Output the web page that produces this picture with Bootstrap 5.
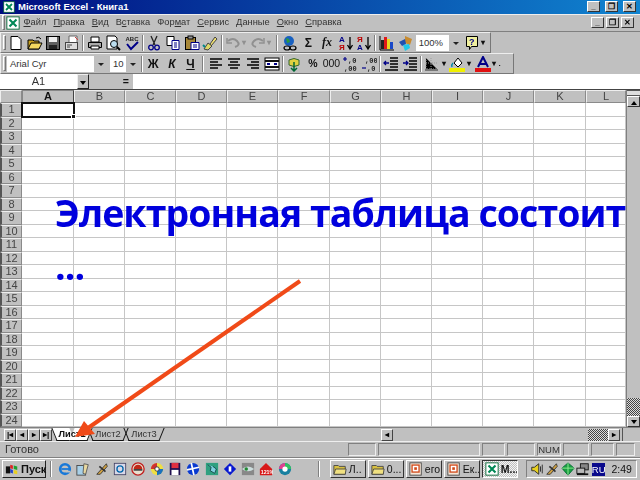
<!DOCTYPE html>
<html lang="ru">

<head>
    <meta charset="UTF-8">
    <meta name="viewport" content="width=device-width, initial-scale=1">
    <title>Microsoft Excel - Книга1</title>
    <link href="https://cdn.jsdelivr.net/npm/bootstrap@5.3.0/dist/css/bootstrap.min.css" rel="stylesheet">
    <style>
        html, body { margin: 0; width: 640px; height: 480px; overflow: hidden; background: #c0c0c0; }
        .xl-app { width: 640px; height: 480px; font: 10.5px/1 "Liberation Sans", Arial, sans-serif; color: #111; filter: blur(.35px); }
        .xl-title { height: 15px; background: linear-gradient(90deg, #000c80, #1084d0); color: #fff; font-weight: 700; font-size: 9.5px; padding-left: 3px; gap: 3px; border-bottom: 1px solid #eee; }
        .xl-wbtn { width: 13px; height: 11px; background: #c0c0c0; border: 1px solid; border-color: #fff #333 #333 #fff; font-size: 8px; font-weight: 700; color: #000; line-height: 9px; text-align: center; margin-left: 2px; flex: none; overflow: hidden; }
        .xl-menu { height: 18px; padding: 0 2px 0 1px; border-bottom: 1px solid #808080; font-size: 9.3px; color: #333; }
        .xl-grip { width: 3px; height: 15px; border: 1px solid; border-color: #fff #777 #777 #fff; margin: 0 1px; flex: none; }
        .xl-item { padding: 0 3.5px; white-space: nowrap; flex: none; }
        .xl-bar { height: 21px; border: 1px solid; border-color: #eee #777 #777 #eee; padding-left: 1px; }
        .xl-bar-a { width: 491px; }
        .xl-bar-b { width: 514px; }
        .xl-barwrap { background: #c0c0c0; }
        .xl-tb { width: 18.6px; height: 18px; flex: none; display: flex; align-items: center; justify-content: center; }
        .xl-tb svg { width: 16px; height: 16px; }
        .xl-glyph { font-weight: 700; font-size: 12px; }
        .xl-serif { font: italic 700 12px "Liberation Serif", serif; }
        .xl-sep { width: 2px; height: 16px; border-left: 1px solid #808080; border-right: 1px solid #fff; margin: 0 1px; flex: none; }
        .xl-sep-wide { margin: 0 2.4px; }
        .xl-sep-start { margin: 0 4px; }
        .xl-sep-task { margin: 0 10px 0 24px; }
        .xl-combo { height: 16px; background: #fff; border-right: 14px solid #c0c0c0; padding-left: 3px; line-height: 16px; font-size: 9.5px; color: #333; position: relative; flex: none; }
        .xl-combo::after { content: ""; position: absolute; right: -10px; top: 7px; border: 3px solid transparent; border-top: 3px solid #222; }
        .xl-combo-zoom { width: 47px; margin-left: 1px; }
        .xl-combo-font { width: 101px; }
        .xl-combo-size { width: 30px; margin-left: 2px; }
        .xl-tw { width: 6.5px; font-weight: 700; font-size: 8px; flex: none; }
        .xl-gray { color: #909090; }
        .xl-formula { height: 15px; background: #fff; }
        .xl-namebox { width: 77px; text-align: center; line-height: 15px; font-size: 11px; color: #333; }
        .xl-dd { width: 12px; background: #c0c0c0; border: 1px solid; border-color: #eee #222 #222 #eee; position: relative; }
        .xl-dd::after { content: ""; position: absolute; left: 2px; top: 6px; border: 3px solid transparent; border-top: 4px solid #000; }
        .xl-eq { width: 44px; background: #c0c0c0; text-align: right; padding-right: 4px; font-weight: 700; line-height: 15px; }
        .xl-sheet { height: 339px; background: #fff; border-top: 1px solid #444; }
        .xl-grid { width: 626px; display: grid; grid-template-columns: 22px 52px 51px 51px 51px 51px 52px 51px 51px 51px 51px 52px 40px; grid-template-rows: 13px repeat(24, 13.5px); }
        .xl-cell { border-right: 1px solid #c6c6c6; border-bottom: 1px solid #c6c6c6; }
        .xl-hd { background: #c0c0c0; border: 1px solid; border-color: #eee #8a8a8a #8a8a8a #eee; text-align: center; font-size: 11px; line-height: 11.5px; color: #444; overflow: hidden; }
        .xl-hd.xl-on { color: #111; font-weight: 700; border-color: #888 #444 #444 #888; }
        .xl-rowhd { border-left: 2px solid #555; }
        .xl-active { outline: 2px solid #111; outline-offset: -1px; position: relative; z-index: 1; }
        .xl-active::after { content: ""; position: absolute; right: -3px; bottom: -3px; width: 5px; height: 5px; background: #111; border: 1px solid #fff; }
        .xl-vscroll { width: 14px; background: #c0c0c0; border-left: 1px solid #808080; }
        .xl-split { height: 6px; border-top: 1px solid #555; border-bottom: 1px solid #555; background: #ddd; flex: none; }
        .xl-sbtn { height: 11px; background: #c0c0c0; border: 1px solid; border-color: #fff #333 #333 #fff; position: relative; flex: none; }
        .xl-up::after { content: ""; position: absolute; left: 3px; top: 1px; border: 3px solid transparent; border-bottom: 4px solid #000; }
        .xl-down::after { content: ""; position: absolute; left: 3px; top: 3px; border: 3px solid transparent; border-top: 4px solid #000; }
        .xl-dither { background: conic-gradient(#444 25%, #ddd 0 50%, #444 0 75%, #ddd 0) 0 0 / 2px 2px; }
        .xl-dither-v { height: 18px; flex: none; }
        .xl-dither-h { width: 20px; height: 12px; flex: none; }
        .xl-tabs { height: 14px; background: #c0c0c0; border-top: 1px solid #808080; }
        .xl-nav { width: 12px; text-align: center; font-size: 8px; font-weight: 700; line-height: 10px; height: 12px; color: #000; border: 1px solid; border-color: #fff #444 #444 #fff; flex: none; }
        .xl-tab { width: 36px; font-size: 9.3px; line-height: 13px; text-align: center; flex: none; color: #333; position: relative; z-index: 0; }
        .xl-tab::before, .xl-tab::after { content: ""; position: absolute; top: 0; bottom: 0; width: 50%; border-bottom: 1px solid #111; z-index: -1; }
        .xl-tab::before { left: 0; border-left: 1px solid #111; transform: skewX(22deg); }
        .xl-tab::after { right: 0; border-right: 1px solid #111; transform: skewX(-22deg); }
        .xl-tab.xl-cur { font-weight: 700; color: #111; margin-left: 2px; }
        .xl-tab.xl-cur::before, .xl-tab.xl-cur::after { background: #fff; }
        .xl-track { width: 195px; height: 12px; flex: none; }
        .xl-hend { width: 18px; height: 13px; border-left: 1px solid #555; margin-left: 2px; flex: none; }
        .xl-status { height: 17px; border-top: 1px solid #eee; border-bottom: 1px solid #808080; font-size: 11px; color: #333; }
        .xl-ready { width: 346px; padding-left: 5px; flex: none; }
        .xl-pane { height: 13px; border: 1px solid; border-color: #808080 #eee #eee #808080; flex: none; margin-left: 2px; line-height: 12px; text-align: center; font-size: 9.5px; }
        .xl-w18 { width: 19px; } .xl-w22 { width: 23px; } .xl-w24 { width: 24px; } .xl-w26 { width: 26px; } .xl-w28 { width: 28px; } .xl-w102 { width: 102px; }
        .xl-task { height: 23px; border-top: 1px solid #fff; padding: 0 2px; }
        .xl-start { width: 44px; height: 18px; border: 1px solid; border-color: #fff #222 #222 #fff; font-weight: 700; font-size: 11px; gap: 2px; padding-left: 2px; flex: none; }
        .xl-ql { width: 18.3px; flex: none; text-align: center; }
        .xl-ql svg, .xl-tbtn svg, .xl-start svg { width: 14px; height: 14px; flex: none; }
        .xl-tbtn { width: 36px; height: 18px; border: 1px solid; border-color: #fff #333 #333 #fff; font-size: 10.5px; gap: 2px; padding-left: 2px; flex: none; margin-right: 2px; overflow: hidden; white-space: nowrap; }
        .xl-tbtn.xl-press { background: conic-gradient(#c0c0c0 25%, #f4f4f4 0 50%, #c0c0c0 0 75%, #f4f4f4 0) 0 0 / 2px 2px; border-color: #333 #fff #fff #333; font-weight: 700; }
        .xl-tray { width: 111px; height: 18px; border: 1px solid; border-color: #808080 #fff #fff #808080; gap: 1.500px; padding-left: 3px; margin-left: 6px; flex: none; }
        .xl-tray svg { width: 14px; height: 14px; flex: none; }
        .xl-ru { background: #0a0a8c; color: #fff; width: 13px; font-size: 9.5px; line-height: 13px; text-align: center; flex: none; }
        .xl-headline, .xl-dots { position: absolute; left: 55px; font: 700 37.5px/55px "Open Sans", sans-serif; color: #0000dd; margin: 0; white-space: nowrap; letter-spacing: -.95px; }
        .xl-headline { top: 185px; }
        .xl-dots { top: 238px; }
        .xl-arrow { position: absolute; left: 0; top: 0; width: 640px; height: 480px; pointer-events: none; }
    </style>
</head>

<body>
    <svg width="0" height="0" class="position-absolute">
        <defs>
            <symbol id="i-xl" viewBox="0 0 16 16"><rect x="1" y="1" width="14" height="14" fill="#fff" stroke="#063"/><path d="M4 4l8 8M12 4l-8 8" stroke="#085" stroke-width="2.4"/></symbol>
            <symbol id="i-new" viewBox="0 0 16 16"><path d="M3 1.500h7l3 3v10H3z" fill="#fff" stroke="#000"/></symbol>
            <symbol id="i-open" viewBox="0 0 16 16"><path d="M1 5h5l1 1h5v8H1z" fill="#c8a020" stroke="#000"/><path d="M1 14l3-6h11l-3 6z" fill="#f4d860" stroke="#000"/><path d="M9 3q3-2 5 1" fill="none" stroke="#000"/></symbol>
            <symbol id="i-save" viewBox="0 0 16 16"><rect x="1.500" y="1.500" width="13" height="13" fill="#606060" stroke="#000"/><rect x="4" y="2" width="8" height="5" fill="#eee"/><rect x="4" y="10" width="8" height="4" fill="#222"/></symbol>
            <symbol id="i-mail" viewBox="0 0 16 16"><path d="M5 1h8v8H5z" fill="#fff" stroke="#666"/><rect x="1.500" y="7.500" width="12" height="7" fill="#ddd" stroke="#444"/><path d="M3 10h5M3 12h3" stroke="#444"/><path d="M11 2l3 3" stroke="#c44"/></symbol>
            <symbol id="i-print" viewBox="0 0 16 16"><path d="M4 2h8v5H4z" fill="#fff" stroke="#000"/><path d="M1.500 7.500h13v5h-13z" fill="#aaa" stroke="#000"/><path d="M4 11h8v3H4z" fill="#fff" stroke="#000"/></symbol>
            <symbol id="i-prev" viewBox="0 0 16 16"><path d="M2 1h8l2 2v11H2z" fill="#fff" stroke="#000"/><circle cx="9" cy="9" r="3.500" fill="#bde" stroke="#000"/><path d="M12 12l3 3" stroke="#000" stroke-width="2"/></symbol>
            <symbol id="i-spell" viewBox="0 0 16 16"><text x="1.500" y="6" font-size="6" font-weight="700" font-family="Liberation Sans" fill="#222">ABC</text><path d="M3 9l4 5 7-7" fill="none" stroke="#008" stroke-width="2"/></symbol>
            <symbol id="i-cut" viewBox="0 0 16 16"><path d="M5 1l4 9M11 1L7 10" stroke="#222" stroke-width="1.300"/><circle cx="5" cy="12.500" r="2.300" fill="none" stroke="#008" stroke-width="1.300"/><circle cx="11" cy="12.500" r="2.300" fill="none" stroke="#008" stroke-width="1.300"/></symbol>
            <symbol id="i-copy" viewBox="0 0 16 16"><path d="M2 1.500h7v9H2z" fill="#fff" stroke="#000"/><path d="M7 5.500h7v9H7z" fill="#fff" stroke="#008"/><path d="M9 8h3M9 10h3M9 12h3" stroke="#008"/></symbol>
            <symbol id="i-paste" viewBox="0 0 16 16"><rect x="1.500" y="2.500" width="10" height="12" fill="#a88838" stroke="#000"/><rect x="4" y="1" width="5" height="3" fill="#999" stroke="#000"/><path d="M7 7.500h8v7H7z" fill="#fff" stroke="#008"/><path d="M9 10h4M9 12h4" stroke="#008"/></symbol>
            <symbol id="i-brush" viewBox="0 0 16 16"><path d="M8 9l5-7 2 2-6 7z" fill="#f0e070" stroke="#444"/><path d="M2 14l4-6 4 3-4 4z" fill="#ddd868" stroke="#444"/><path d="M1 10l2 2" stroke="#088" stroke-width="2"/></symbol>
            <symbol id="i-undo" viewBox="0 0 16 16"><path d="M3 6q5-4 9 0t-2 6" fill="none" stroke="#909090" stroke-width="2"/><path d="M2 3v5h5" fill="none" stroke="#909090" stroke-width="1.500"/></symbol>
            <symbol id="i-redo" viewBox="0 0 16 16"><path d="M13 6q-5-4-9 0t2 6" fill="none" stroke="#909090" stroke-width="2"/><path d="M14 3v5H9" fill="none" stroke="#909090" stroke-width="1.500"/></symbol>
            <symbol id="i-web" viewBox="0 0 16 16"><circle cx="7" cy="6" r="5" fill="#1860c0"/><path d="M4 3l3 1 1 3-3 1z" fill="#2a9a40"/><ellipse cx="5" cy="13" rx="3" ry="2" fill="none" stroke="#000" stroke-width="1.200"/><ellipse cx="11" cy="13" rx="3" ry="2" fill="none" stroke="#000" stroke-width="1.200"/></symbol>
            <symbol id="i-az" viewBox="0 0 16 16"><text x="1" y="7" font-size="8" font-weight="700" font-family="Liberation Sans" fill="#008">A</text><text x="1" y="15" font-size="8" font-weight="700" font-family="Liberation Sans" fill="#b00">Я</text><path d="M12 2v11M9.500 10l2.500 4 2.500-4" fill="none" stroke="#000" stroke-width="1.300"/></symbol>
            <symbol id="i-za" viewBox="0 0 16 16"><text x="1" y="7" font-size="8" font-weight="700" font-family="Liberation Sans" fill="#b00">Я</text><text x="1" y="15" font-size="8" font-weight="700" font-family="Liberation Sans" fill="#008">A</text><path d="M12 2v11M9.500 10l2.500 4 2.500-4" fill="none" stroke="#000" stroke-width="1.300"/></symbol>
            <symbol id="i-chart" viewBox="0 0 16 16"><rect x="2" y="5" width="3" height="9" fill="#222"/><rect x="5" y="2" width="3" height="12" fill="#e01818"/><rect x="8" y="4" width="3" height="10" fill="#e8d820"/><rect x="11" y="7" width="3" height="7" fill="#1848c8"/><path d="M1 1v14h14" fill="none" stroke="#000"/></symbol>
            <symbol id="i-map" viewBox="0 0 16 16"><path d="M8 1l7 3-2 6-5-2z" fill="#c88c30"/><path d="M2 7l6-3 1 5-4 2z" fill="#2050b0"/><path d="M6 10l6-1 1 4-5 3z" fill="#20c8e8"/></symbol>
            <symbol id="i-help" viewBox="0 0 16 16"><path d="M2.500 1.500h11v10h-6l-2 3v-3h-3z" fill="#f0f0a0" stroke="#000"/><text x="5" y="10" font-size="9" font-weight="700" font-family="Liberation Sans" fill="#008">?</text></symbol>
            <symbol id="i-left" viewBox="0 0 16 16"><path d="M2 3h12M2 6h8M2 9h12M2 12h8" stroke="#000" stroke-width="1.400"/></symbol>
            <symbol id="i-center" viewBox="0 0 16 16"><path d="M2 3h12M4 6h8M2 9h12M4 12h8" stroke="#000" stroke-width="1.400"/></symbol>
            <symbol id="i-right" viewBox="0 0 16 16"><path d="M2 3h12M6 6h8M2 9h12M6 12h8" stroke="#000" stroke-width="1.400"/></symbol>
            <symbol id="i-merge" viewBox="0 0 16 16"><rect x="1" y="2" width="14" height="12" fill="#fff" stroke="#000"/><path d="M1 5h14M1 11h14" stroke="#111" stroke-width="2"/><path d="M3 8h3M13 8h-3" stroke="#008" stroke-width="2"/></symbol>
            <symbol id="i-cur" viewBox="0 0 16 16"><path d="M3 4q5-3 10 0v5q-5 3-10 0z" fill="#e0d040" stroke="#363"/><path d="M8 6v9M5 12l3 3 3-3" stroke="#063" stroke-width="1.500" fill="none"/></symbol>
            <symbol id="i-inc" viewBox="0 0 16 16"><text x="6" y="7" font-size="7" font-weight="700" font-family="Liberation Mono" fill="#222">,0</text><text x="2" y="15" font-size="7" font-weight="700" font-family="Liberation Mono" fill="#222">,00</text><path d="M1 3h4M3 1v4" stroke="#008" stroke-width="1.200"/></symbol>
            <symbol id="i-dec" viewBox="0 0 16 16"><text x="4" y="7" font-size="7" font-weight="700" font-family="Liberation Mono" fill="#222">,00</text><text x="6" y="15" font-size="7" font-weight="700" font-family="Liberation Mono" fill="#222">,0</text><path d="M1 12h4" stroke="#008" stroke-width="1.200"/></symbol>
            <symbol id="i-outd" viewBox="0 0 16 16"><path d="M7 2h8M7 5h8M7 8h8M7 11h8M2 14h13" stroke="#000" stroke-width="1.400"/><path d="M6 7H1M3 5L1 7l2 2" stroke="#008" stroke-width="1.300" fill="none"/></symbol>
            <symbol id="i-ind" viewBox="0 0 16 16"><path d="M7 2h8M7 5h8M7 8h8M7 11h8M2 14h13" stroke="#000" stroke-width="1.400"/><path d="M1 7h5M4 5l2 2-2 2" stroke="#008" stroke-width="1.300" fill="none"/></symbol>
            <symbol id="i-bord" viewBox="0 0 16 16"><path d="M2 2v11h11M2 7h11M7 2v11" stroke="#999" stroke-dasharray="1 1"/><path d="M1 14h13" stroke="#777" stroke-width="2"/></symbol>
            <symbol id="i-fill" viewBox="0 0 16 16"><path d="M5 7l4-5 4 5-4 4z" fill="#fff" stroke="#000"/><path d="M4 7q-2 2-1 4" stroke="#08a" stroke-width="1.500" fill="none"/><rect x="0" y="12" width="16" height="4" fill="#f0f000"/></symbol>
            <symbol id="i-color" viewBox="0 0 16 16"><path d="M3 11L8 1l5 10M5 8h6" fill="none" stroke="#008" stroke-width="2"/><rect x="0" y="12" width="16" height="4" fill="#e01010"/></symbol>
            <symbol id="i-flag" viewBox="0 0 16 16"><rect x="1" y="5" width="5" height="8" fill="#111"/><path d="M6 3l3 1v4l-3-1z" fill="#e02020"/><path d="M10 4l4 1v4l-4-1z" fill="#20a030"/><path d="M6 8l3 1v4l-3-1z" fill="#2040d0"/><path d="M10 9l4 1v4l-4-1z" fill="#e8d020"/></symbol>
            <symbol id="i-ie" viewBox="0 0 16 16"><circle cx="8" cy="8" r="5.500" fill="none" stroke="#1878d8" stroke-width="3"/><path d="M4 8h9" stroke="#1878d8" stroke-width="2"/><path d="M9 11h5" stroke="#c0c0c0" stroke-width="2"/></symbol>
            <symbol id="i-desk" viewBox="0 0 16 16"><rect x="1" y="4" width="10" height="11" fill="#a8d0e8" stroke="#444"/><path d="M9 2l5 1-3 11-3-1z" fill="#e8d8a0" stroke="#555"/></symbol>
            <symbol id="i-quill" viewBox="0 0 16 16"><path d="M2 14L13 2l1 3-8 9z" fill="#d0a040" stroke="#333"/><path d="M5 5l7 6" stroke="#333" stroke-width="2"/></symbol>
            <symbol id="i-outlk" viewBox="0 0 16 16"><rect x="1.500" y="1.500" width="13" height="13" fill="#d8d8e8" stroke="#446"/><circle cx="8" cy="8" r="3.500" fill="none" stroke="#06a" stroke-width="1.500"/></symbol>
            <symbol id="i-redc" viewBox="0 0 16 16"><circle cx="8" cy="8" r="7" fill="#e8e0d0" stroke="#c02020" stroke-width="1.500"/><path d="M3 8a5 5 0 0 1 10 0z" fill="#c02818"/><rect x="3" y="8" width="10" height="2" fill="#444"/></symbol>
            <symbol id="i-cd" viewBox="0 0 16 16"><circle cx="8" cy="8" r="7" fill="#f0e040"/><path d="M8 8L1 8A7 7 0 0 1 8 1z" fill="#d03030"/><path d="M8 8l7 0A7 7 0 0 1 8 15z" fill="#1870c0"/><circle cx="8" cy="8" r="2.500" fill="#fff" stroke="#333"/></symbol>
            <symbol id="i-disk" viewBox="0 0 16 16"><rect x="2" y="1" width="12" height="14" fill="#201050"/><rect x="4" y="1" width="8" height="6" fill="#e03040"/><rect x="4" y="9" width="8" height="6" fill="#fff"/></symbol>
            <symbol id="i-blue" viewBox="0 0 16 16"><circle cx="8" cy="8" r="7" fill="#0a3ad0"/><path d="M1 9l14-3M6 1l3 14" stroke="#fff" stroke-width="2"/></symbol>
            <symbol id="i-green" viewBox="0 0 16 16"><rect x="1" y="1" width="14" height="14" fill="#30a080"/><path d="M3 3l4 3-1 4 5 3 2-5-4-3" fill="#80d0e0" stroke="#144"/></symbol>
            <symbol id="i-diam" viewBox="0 0 16 16"><path d="M8 1l7 7-7 7-7-7z" fill="#0818d0"/><rect x="6.500" y="5" width="3" height="6" fill="#fff"/></symbol>
            <symbol id="i-eye" viewBox="0 0 16 16"><rect x="1" y="1" width="14" height="14" fill="#888"/><path d="M1 8q7-6 14 0-7 5-14 0z" fill="#cdd"/><circle cx="6" cy="8" r="2" fill="#283"/></symbol>
            <symbol id="i-redh" viewBox="0 0 16 16"><path d="M8 1l7 7v7H1V8z" fill="#d81818"/><text x="2" y="14" font-size="6" font-weight="700" font-family="Liberation Sans" fill="#fff">121%</text></symbol>
            <symbol id="i-swirl" viewBox="0 0 16 16"><circle cx="8" cy="8" r="7" fill="#1880a0"/><path d="M8 1a7 7 0 0 1 7 7H8z" fill="#30c060"/><path d="M1 8a7 7 0 0 1 7-7v7z" fill="#e04090"/><circle cx="8" cy="8" r="3" fill="#fff"/></symbol>
            <symbol id="i-folder" viewBox="0 0 16 16"><path d="M1 4h5l1 1h7v9H1z" fill="#d8c040" stroke="#444"/><path d="M1 14l2-6h12l-1 6z" fill="#f0e080" stroke="#444"/></symbol>
            <symbol id="i-ppt" viewBox="0 0 16 16"><rect x="1" y="1" width="13" height="14" fill="#f8e8d8" stroke="#444"/><rect x="3.500" y="3.500" width="8" height="8" fill="#fff" stroke="#d04818" stroke-width="1.500"/><rect x="6" y="6" width="3" height="3" fill="#d04818"/></symbol>
            <symbol id="i-spk" viewBox="0 0 16 16"><path d="M2 6h3l5-4v12l-5-4H2z" fill="#e8d020" stroke="#222"/><path d="M12 5v6M14 3v10" stroke="#222"/></symbol>
            <symbol id="i-cube" viewBox="0 0 16 16"><path d="M8 1l7 6-7 8-7-8z" fill="#18a040" stroke="#063"/><path d="M8 1v14M1 7h14" stroke="#9e9"/></symbol>
            <symbol id="i-pc" viewBox="0 0 16 16"><rect x="5" y="2" width="9" height="7" fill="#888" stroke="#111"/><rect x="1" y="7" width="9" height="6" fill="#bbb" stroke="#111"/><path d="M1 14h13" stroke="#111" stroke-width="2"/></symbol>
        </defs>
    </svg>

    <div class="xl-app position-relative d-flex flex-column">
        <div class="xl-title d-flex align-items-center">
            <svg width="12" height="12"><use href="#i-xl"/></svg>
            <span class="flex-grow-1">Microsoft Excel - Книга1</span>
            <span class="xl-wbtn">_</span><span class="xl-wbtn">❐</span><span class="xl-wbtn me-1">✕</span>
        </div>

        <div class="xl-menu d-flex align-items-center">
            <span class="xl-grip"></span>
            <svg width="14" height="14"><use href="#i-xl"/></svg>
            <span class="xl-item"><u>Ф</u>айл</span>
            <span class="xl-item"><u>П</u>равка</span>
            <span class="xl-item"><u>В</u>ид</span>
            <span class="xl-item">В<u>с</u>тавка</span>
            <span class="xl-item">Фор<u>м</u>ат</span>
            <span class="xl-item"><u>С</u>ервис</span>
            <span class="xl-item"><u>Д</u>анные</span>
            <span class="xl-item"><u>О</u>кно</span>
            <span class="xl-item"><u>С</u>правка</span>
            <span class="ms-auto xl-wbtn">_</span><span class="xl-wbtn">❐</span><span class="xl-wbtn me-1">✕</span>
        </div>

        <div class="xl-barwrap">
            <div class="xl-bar xl-bar-a d-flex align-items-center">
                <span class="xl-grip"></span>
                <span class="xl-tb"><svg><use href="#i-new"/></svg></span>
                <span class="xl-tb"><svg><use href="#i-open"/></svg></span>
                <span class="xl-tb"><svg><use href="#i-save"/></svg></span>
                <span class="xl-tb"><svg><use href="#i-mail"/></svg></span>
                <span class="xl-sep"></span>
                <span class="xl-tb"><svg><use href="#i-print"/></svg></span>
                <span class="xl-tb"><svg><use href="#i-prev"/></svg></span>
                <span class="xl-tb"><svg><use href="#i-spell"/></svg></span>
                <span class="xl-sep"></span>
                <span class="xl-tb"><svg><use href="#i-cut"/></svg></span>
                <span class="xl-tb"><svg><use href="#i-copy"/></svg></span>
                <span class="xl-tb"><svg><use href="#i-paste"/></svg></span>
                <span class="xl-tb"><svg><use href="#i-brush"/></svg></span>
                <span class="xl-sep"></span>
                <span class="xl-tb"><svg><use href="#i-undo"/></svg></span>
                <span class="xl-tw xl-gray">▾</span>
                <span class="xl-tb"><svg><use href="#i-redo"/></svg></span>
                <span class="xl-tw xl-gray">▾</span>
                <span class="xl-sep xl-sep-wide"></span>
                <span class="xl-tb"><svg><use href="#i-web"/></svg></span>
                <span class="xl-tb xl-glyph">Σ</span>
                <span class="xl-tb xl-serif">fx</span>
                <span class="xl-tb"><svg><use href="#i-az"/></svg></span>
                <span class="xl-tb"><svg><use href="#i-za"/></svg></span>
                <span class="xl-sep"></span>
                <span class="xl-tb"><svg><use href="#i-chart"/></svg></span>
                <span class="xl-tb"><svg><use href="#i-map"/></svg></span>
                <span class="xl-combo xl-combo-zoom">100%</span>
                <span class="xl-tb"><svg><use href="#i-help"/></svg></span>
                <span class="xl-tw">▾</span>
            </div>
            <div class="xl-bar xl-bar-b d-flex align-items-center">
                <span class="xl-grip"></span>
                <span class="xl-combo xl-combo-font">Arial Cyr</span>
                <span class="xl-combo xl-combo-size">10</span>
                <span class="xl-sep"></span>
                <span class="xl-tb xl-glyph">Ж</span>
                <span class="xl-tb xl-glyph fst-italic">К</span>
                <span class="xl-tb xl-glyph text-decoration-underline">Ч</span>
                <span class="xl-sep xl-sep-wide"></span>
                <span class="xl-tb"><svg><use href="#i-left"/></svg></span>
                <span class="xl-tb"><svg><use href="#i-center"/></svg></span>
                <span class="xl-tb"><svg><use href="#i-right"/></svg></span>
                <span class="xl-tb"><svg><use href="#i-merge"/></svg></span>
                <span class="xl-sep"></span>
                <span class="xl-tb"><svg><use href="#i-cur"/></svg></span>
                <span class="xl-tb fw-bold">%</span>
                <span class="xl-tb">000</span>
                <span class="xl-tb"><svg><use href="#i-inc"/></svg></span>
                <span class="xl-tb"><svg><use href="#i-dec"/></svg></span>
                <span class="xl-sep"></span>
                <span class="xl-tb"><svg><use href="#i-outd"/></svg></span>
                <span class="xl-tb"><svg><use href="#i-ind"/></svg></span>
                <span class="xl-sep"></span>
                <span class="xl-tb"><svg><use href="#i-bord"/></svg></span>
                <span class="xl-tw">▾</span>
                <span class="xl-tb"><svg><use href="#i-fill"/></svg></span>
                <span class="xl-tw">▾</span>
                <span class="xl-tb"><svg><use href="#i-color"/></svg></span>
                <span class="xl-tw">▾</span>
                <span class="xl-tw">.</span>
            </div>
        </div>

        <div class="xl-formula d-flex">
            <div class="xl-namebox">A1</div>
            <div class="xl-dd"></div>
            <div class="xl-eq">=</div>
        </div>

        <div class="xl-sheet d-flex">
            <div class="xl-grid" id="xlGrid"></div>
            <div class="xl-vscroll d-flex flex-column flex-grow-1">
                <div class="xl-split"></div>
                <div class="xl-sbtn xl-up"></div>
                <div class="flex-grow-1"></div>
                <div class="xl-dither xl-dither-v"></div>
                <div class="xl-sbtn xl-down"></div>
            </div>
        </div>

        <div class="xl-tabs d-flex align-items-center">
            <span class="xl-nav ms-1">|◂</span><span class="xl-nav">◂</span><span class="xl-nav">▸</span><span class="xl-nav">▸|</span>
            <span class="xl-tab xl-cur">Лист1</span>
            <span class="xl-tab">Лист2</span>
            <span class="xl-tab">Лист3</span>
            <span class="ms-auto xl-nav">◂</span>
            <span class="xl-track"></span>
            <span class="xl-dither xl-dither-h"></span>
            <span class="xl-nav">▸</span>
            <span class="xl-hend"></span>
        </div>

        <div class="xl-status d-flex align-items-center">
            <span class="xl-ready">Готово</span>
            <span class="xl-pane xl-w28"></span>
            <span class="xl-pane xl-w102"></span>
            <span class="xl-pane xl-w22"></span>
            <span class="xl-pane xl-w28"></span>
            <span class="xl-pane xl-w24">NUM</span>
            <span class="xl-pane xl-w26"></span>
            <span class="xl-pane xl-w22"></span>
            <span class="xl-pane xl-w18"></span>
        </div>

        <div class="xl-task d-flex align-items-center">
            <span class="xl-start d-flex align-items-center"><svg><use href="#i-flag"/></svg>Пуск</span>
            <span class="xl-sep xl-sep-start"></span>
            <span class="xl-ql"><svg><use href="#i-ie"/></svg></span>
            <span class="xl-ql"><svg><use href="#i-desk"/></svg></span>
            <span class="xl-ql"><svg><use href="#i-quill"/></svg></span>
            <span class="xl-ql"><svg><use href="#i-outlk"/></svg></span>
            <span class="xl-ql"><svg><use href="#i-redc"/></svg></span>
            <span class="xl-ql"><svg><use href="#i-cd"/></svg></span>
            <span class="xl-ql"><svg><use href="#i-disk"/></svg></span>
            <span class="xl-ql"><svg><use href="#i-blue"/></svg></span>
            <span class="xl-ql"><svg><use href="#i-green"/></svg></span>
            <span class="xl-ql"><svg><use href="#i-diam"/></svg></span>
            <span class="xl-ql"><svg><use href="#i-eye"/></svg></span>
            <span class="xl-ql"><svg><use href="#i-redh"/></svg></span>
            <span class="xl-ql"><svg><use href="#i-swirl"/></svg></span>
            <span class="xl-sep xl-sep-task"></span>
            <span class="xl-tbtn d-flex align-items-center"><svg><use href="#i-folder"/></svg>Л..</span>
            <span class="xl-tbtn d-flex align-items-center"><svg><use href="#i-folder"/></svg>0...</span>
            <span class="xl-tbtn d-flex align-items-center"><svg><use href="#i-ppt"/></svg>его</span>
            <span class="xl-tbtn d-flex align-items-center"><svg><use href="#i-ppt"/></svg>Ек..</span>
            <span class="xl-tbtn xl-press d-flex align-items-center"><svg><use href="#i-xl"/></svg>M...</span>
            <span class="xl-tray d-flex align-items-center">
                <svg><use href="#i-spk"/></svg><svg><use href="#i-quill"/></svg><svg><use href="#i-cube"/></svg><svg><use href="#i-pc"/></svg>
                <span class="xl-ru">RU</span>
                <span class="ms-auto me-1">2:49</span>
            </span>
        </div>

        <p class="xl-headline">Электронная таблица состоит</p>
        <p class="xl-dots">...</p>
        <svg class="xl-arrow" viewBox="0 0 640 480">
            <path d="M300 281L88 428" stroke="#f04a18" stroke-width="4"/>
            <path d="M75 437L84 421L95 434z" fill="#f04a18"/>
        </svg>
    </div>

    <script>
        let grid = document.getElementById("xlGrid");
        let html = '<div class="xl-hd"></div>';
        "ABCDEFGHIJKL".split("").forEach((c, i) => {
            html += `<div class="xl-hd ${i === 0 ? "xl-on" : ""}">${c}</div>`;
        });
        for (let r = 1; r <= 24; r++) {
            html += `<div class="xl-hd xl-rowhd">${r}</div>`;
            for (let c = 0; c < 12; c++) {
                html += `<div class="xl-cell ${r === 1 && c === 0 ? "xl-active" : ""}"></div>`;
            }
        }
        grid.innerHTML = html;
    </script>
    <script src="https://cdn.jsdelivr.net/npm/bootstrap@5.3.0/dist/js/bootstrap.bundle.min.js"></script>
</body>

</html>
